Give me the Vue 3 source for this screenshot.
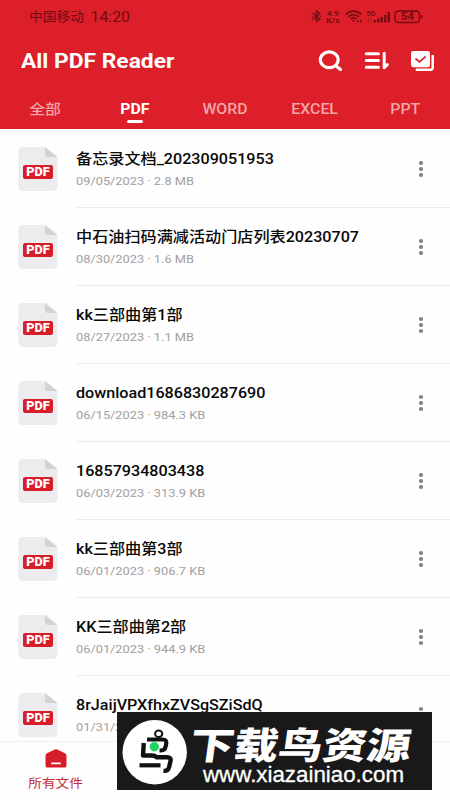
<script setup>
const files = [
  { name: '备忘录文档_202309051953', date: '09/05/2023', size: '2.8 MB' },
  { name: '中石油扫码满减活动门店列表20230707', date: '08/30/2023', size: '1.6 MB' },
  { name: 'kk三部曲第1部', date: '08/27/2023', size: '1.1 MB' },
  { name: 'download1686830287690', date: '06/15/2023', size: '984.3 KB' },
  { name: '16857934803438', date: '06/03/2023', size: '313.9 KB' },
  { name: 'kk三部曲第3部', date: '06/01/2023', size: '906.7 KB' },
  { name: 'KK三部曲第2部', date: '06/01/2023', size: '944.9 KB' },
  { name: '8rJaijVPXfhxZVSgSZiSdQ', date: '01/31/2023', size: '1.2 MB' }
]
const tabs = ['全部', 'PDF', 'WORD', 'EXCEL', 'PPT']
const active = 'PDF'
</script>

<template>
  <div class="screen">
    <header class="header">
      <div class="status">
        <svg class="carrier" width="110" height="20">
          <text x="0" y="15.4" font-size="12.8" textLength="55" lengthAdjust="spacingAndGlyphs">中国移动</text>
          <text x="61.5" y="15.8" font-size="14.6" textLength="39.5" lengthAdjust="spacingAndGlyphs">14:20</text>
        </svg>
        <svg class="signals" width="114" height="20" fill="none" stroke="#720b12" stroke-width="1.3">
          <path d="M1.5 7 L9 13 L5.500 15.500 V5 L9 7.500 L1.500 13.500" />
          <circle cx="1.200" cy="10.300" r=".8" class="solid" /><circle cx="10" cy="10.300" r=".8" class="solid" />
          <text class="mini" x="16" y="9.800" textLength="11.500" lengthAdjust="spacingAndGlyphs">4.9</text>
          <text class="mini" x="15" y="17" textLength="13.500" lengthAdjust="spacingAndGlyphs">K/s</text>
          <path stroke-width="1.600" d="M34.500 8.300 Q42.500 1.800 50.500 8.300 M37 10.800 Q42.500 6.600 48 10.800 M39.700 13 Q42.500 11 45.300 13" />
          <circle cx="42.500" cy="15" r="1.100" class="solid" />
          <path class="solid" d="M45.500 15.200 l2-1.700 v3.400z M51 15.200 l-2-1.700 v3.400z" />
          <text class="mini" x="55.500" y="10.200" textLength="9" lengthAdjust="spacingAndGlyphs">5G</text>
          <path stroke-width=".7" d="M57.500 12.500 v4 M60 12.500 v4" opacity=".6" />
          <path stroke-width="2.200" d="M63.800 16.500 v-2.500 M67.300 16.500 v-4 M70.800 16.500 v-5.500 M74.300 16.500 v-7.500 M77.800 16.500 v-10.500" />
          <rect x="84" y="5" width="24.500" height="11.500" rx="3.500" />
          <path class="solid" d="M109.800 9 h.8 q1 0 1 1.700 t-1 1.700 h-.8z" />
          <text x="90" y="14.400" font-size="10.500" font-weight="700" stroke="none" class="solid" textLength="13" lengthAdjust="spacingAndGlyphs">54</text>
        </svg>
      </div>
      <div class="toolbar">
        <h1 class="title">All PDF Reader</h1>
        <div class="actions">
          <svg width="26" height="24" viewBox="0 0 26 24" fill="none" stroke="#fff" stroke-width="3.200" stroke-linecap="round">
            <ellipse cx="12.300" cy="10.800" rx="8.900" ry="7.900" /><path d="M19 17 L23.500 20.500" />
          </svg>
          <svg width="26" height="24" viewBox="0 0 26 24" fill="none" stroke="#fff" stroke-width="3" stroke-linecap="round" stroke-linejoin="round">
            <path d="M3.300 4.800 H15.500 M3.300 11.500 H15.500 M3.300 18.300 H15.500" />
            <path d="M21.200 4.300 V18.700 L24.300 15.600" />
          </svg>
          <svg width="26" height="24" viewBox="0 0 26 24" fill="none" stroke-linecap="round" stroke-linejoin="round">
            <rect x="2" y="2" width="19" height="16.200" rx="2.300" fill="#fff" />
            <path d="M7 10 L10.500 12.800 L16.200 7.800" stroke="#dc1f28" stroke-width="1.700" />
            <path d="M23.700 7 V18.600 Q23.700 20.800 21.500 20.800 H7.800" stroke="#fff" stroke-width="2.500" />
          </svg>
        </div>
      </div>
      <nav class="tabs">
        <div v-for="tab in tabs" :key="tab" class="tab" :class="{ active: tab === active }">
          <span>{{ tab }}</span>
        </div>
      </nav>
    </header>

    <main class="list">
      <article v-for="file in files" :key="file.name" class="row">
        <svg class="doc" width="40" height="45" viewBox="0 0 40 45">
          <path d="M5 0 H27 L39.500 10 V39 Q39.500 44 34.500 44 H5 Q.3 44 .3 39 V5 Q.3 0 5 0z" fill="#ececee" />
          <path d="M27 0 L39.500 10 H30 Q27 10 27 7.300z" fill="#d2d3d4" />
          <rect x="5" y="18" width="30" height="14" rx="2" fill="#d71d28" />
          <text x="8.200" y="29.300" textLength="23.400" lengthAdjust="spacingAndGlyphs">PDF</text>
        </svg>
        <div class="info">
          <div class="text">
            <div class="name">{{ file.name }}</div>
            <div class="meta">{{ file.date }} · {{ file.size }}</div>
          </div>
          <svg class="more" width="6" height="18" fill="#858585">
            <ellipse cx="3" cy="3" rx="2.150" ry="1.900" /><ellipse cx="3" cy="9" rx="2.150" ry="1.900" /><ellipse cx="3" cy="15" rx="2.150" ry="1.900" />
          </svg>
        </div>
      </article>
    </main>

    <footer class="bottom">
      <div class="nav-item">
        <svg width="22" height="19" viewBox="0 0 22 19">
          <path d="M2 4.300 L9.200 .7 Q11 0 12.800 .7 L20 4.300 Q21.500 5 21.500 6.800 V16.500 Q21.500 18.500 20 18.500 H2 Q.5 18.500 .5 16.500 V6.800 Q.5 5 2 4.300z" fill="#d71d28" />
          <path d="M7 14.400 H15" stroke="#fff" stroke-width="1.700" stroke-linecap="round" />
        </svg>
        <span>所有文件</span>
      </div>
    </footer>

    <svg class="banner" width="315" height="78" viewBox="0 0 315 78">
      <rect width="315" height="78" fill="#191919" />
      <circle cx="37.700" cy="40.200" r="32.200" fill="#fff" />
      <g fill="none" stroke="#111" stroke-linejoin="round">
        <ellipse cx="41.700" cy="21.800" rx="3.600" ry="3.300" stroke-width="2" />
        <path stroke-width="4.200" d="M30 27.500 H46 Q49.500 27.500 49.300 31 L48.800 34 Q48 38.500 44 38.500 H42.500" />
        <path stroke-width="4.400" d="M26.800 31 L26 43.500 H35 Q38 43.500 39.500 45.200 H50 Q54.500 45.200 53.500 49 L52 55.500 Q51 59.300 46.500 58.800" />
        <path stroke-width="4.200" d="M22.500 53.300 H43.500" />
      </g>
      <circle cx="37.300" cy="34.700" r="4.700" fill="#20d461" />
      <g fill="#fff">
        <text class="brand" x="71" y="47.500" transform="translate(7 0) skewX(-8)" textLength="221" lengthAdjust="spacingAndGlyphs">下载鸟资源</text>
        <text class="url" x="86" y="70" textLength="201" lengthAdjust="spacingAndGlyphs">www.xiazainiao.com</text>
      </g>
    </svg>
  </div>
</template>

<style>
body { margin: 0; }
</style>

<style scoped>
.screen {
  position: relative;
  display: flex;
  flex-direction: column;
  width: 450px;
  height: 800px;
  overflow: hidden;
  background: #fefefe;
  font-family: Roboto, "Noto Sans CJK SC", sans-serif;
}
svg { display: block; flex: none; }
.header {
  flex: none;
  display: flex;
  flex-direction: column;
  height: 129px;
  box-sizing: border-box;
  background: #dc1f28;
}
.status {
  display: flex;
  justify-content: space-between;
  padding: 6px 25px 0 28.500px;
  height: 36px;
  box-sizing: border-box;
}
.carrier { fill: #720b12; }
.solid { fill: #720b12; stroke: none; }
.mini { fill: #720b12; stroke: none; font-size: 8px; font-weight: 600; }
.toolbar {
  display: flex;
  align-items: center;
  justify-content: space-between;
  height: 50px;
  padding: 0 15px 0 21px;
}
.title {
  margin: 0;
  color: #fff;
  font-size: 20px;
  line-height: 24px;
  font-weight: 700;
  white-space: nowrap;
  transform: scaleX(1.14);
  transform-origin: left;
}
.actions { display: flex; gap: 20px; }
.tabs { display: flex; height: 43px; }
.tab {
  flex: 1;
  display: flex;
  flex-direction: column;
  align-items: center;
  padding-top: 14px;
  color: #f4a6aa;
  font-size: 14px;
  line-height: 19px;
  font-weight: 500;
}
.tab span { transform: scaleX(1.13); }
.tab.active { color: #fff; font-weight: 700; }
.tab.active::after {
  content: "";
  width: 16px;
  height: 3px;
  margin-top: 1px;
  border-radius: 2px;
  background: #fff;
}
.list { flex: 1; min-height: 0; overflow: hidden; padding-top: 1px; }
.row { display: flex; height: 78px; padding-left: 18px; }
.doc { margin-top: 17px; }
.doc text { fill: #fff; font-size: 12.200px; font-weight: 900; }
.info {
  flex: 1;
  display: flex;
  justify-content: space-between;
  margin-left: 18px;
  padding-right: 26px;
  border-bottom: 1px solid #ececec;
}
.text {
  padding-top: 17.500px;
  white-space: nowrap;
  transform: scaleX(1.105);
  transform-origin: left;
}
.name { font-size: 14.600px; line-height: 22px; font-weight: 500; color: #090909; }
.meta { margin-top: 3.500px; font-size: 11.600px; line-height: 16px; color: #a0a0a0; }
.more { margin-top: 30px; }
.bottom {
  flex: none;
  height: 59px;
  box-sizing: border-box;
  border-top: 1px solid #f0f0f0;
  background: #fefefe;
}
.nav-item {
  display: flex;
  flex-direction: column;
  align-items: center;
  width: 112px;
  padding-top: 7px;
  color: #c42d35;
  font-size: 12.300px;
  line-height: 18px;
}
.nav-item span { margin-top: 7px; transform: scaleX(1.11); }
.banner { position: absolute; left: 117px; top: 712px; }
.brand { font-family: "Noto Sans CJK SC", sans-serif; font-weight: 900; font-size: 37px; }
.url { font-family: "Liberation Sans", sans-serif; font-size: 21.500px; stroke: #fff; stroke-width: .3px; }
</style>
